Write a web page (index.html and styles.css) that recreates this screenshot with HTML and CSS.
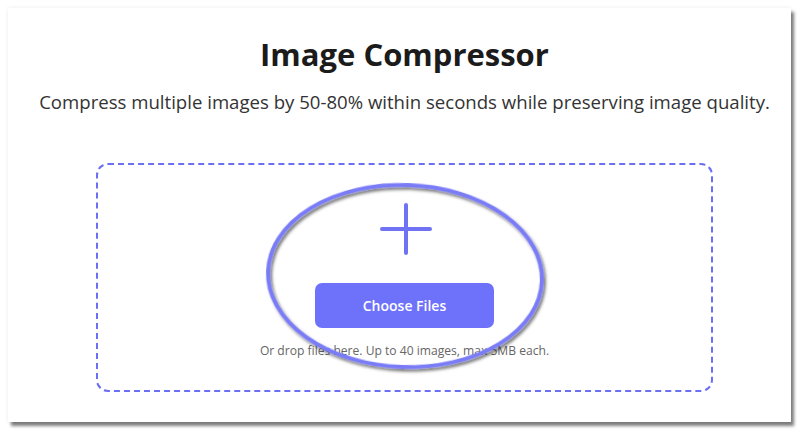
FILE: index.html
```html
<!DOCTYPE html>
<html lang="en">
<head>
<meta charset="utf-8">
<title>Image Compressor</title>
<link rel="stylesheet" href="styles.css">
</head>
<body>
<div class="card">
  <h1 class="title">Image Compressor</h1>
  <p class="subtitle">Compress multiple images by 50-80% within seconds while preserving image quality.</p>
  <div class="dropzone">
    <svg class="plus" width="54" height="54" viewBox="0 0 54 54">
      <path d="M27 3 V51 M3 27 H51" stroke="#6f72f2" stroke-width="4" stroke-linecap="round" fill="none"/>
    </svg>
    <button class="choose">Choose Files</button>
    <p class="hint">Or drop files here. Up to 40 images, max 5MB each.</p>
  </div>
  <svg class="ring" width="300" height="210" viewBox="0 0 300 210">
    <defs>
      <filter id="sh" x="-10%" y="-10%" width="120%" height="120%">
        <feDropShadow dx="2" dy="2.5" stdDeviation="1.6" flood-color="#000" flood-opacity="0.55"/>
      </filter>
    </defs>
    <ellipse cx="150" cy="102" rx="137" ry="91" fill="none" stroke="#7a7cf7" stroke-width="4" filter="url(#sh)" transform="rotate(2 150 102)"/>
  </svg>
</div>
</body>
</html>
```
FILE: styles.css
```css
html, body {
  margin: 0;
  padding: 0;
  background: #ffffff;
}
body {
  font-family: "Open Sans", "Noto Sans", "DejaVu Sans", sans-serif;
  height: 432px;
  overflow: hidden;
}
.card {
  position: relative;
  box-sizing: border-box;
  margin: 8px 0 0 8px;
  width: 783px;
  height: 414px;
  background: #ffffff;
  box-shadow: 3px 4px 3px rgba(0, 0, 0, 0.5), 0 0 4px rgba(0, 0, 0, 0.08);
  padding: 26px 78px 0 88px;
  display: flex;
  flex-direction: column;
  align-items: stretch;
}
.title {
  margin: 0;
  text-align: center;
  font-size: 31px;
  line-height: 40px;
  font-weight: 700;
  color: #1b1b1b;
}
.subtitle {
  margin: 15px -70px 0 -70px;
  text-align: center;
  font-size: 18.6px;
  line-height: 26px;
  color: #333333;
}
.dropzone {
  margin-top: 48px;
  height: 229px;
  box-sizing: border-box;
  border: 2px dashed #6b6ff2;
  border-radius: 12px;
  display: flex;
  flex-direction: column;
  align-items: center;
  padding-top: 37px;
  flex-shrink: 0;
}
.plus {
  display: block;
  margin-left: 2px;
}
.choose {
  margin-top: 27px;
  width: 179px;
  height: 45px;
  border: none;
  border-radius: 7px;
  background: #6e72fb;
  color: #ffffff;
  font-family: "Open Sans", "Noto Sans", sans-serif;
  font-size: 14px;
  font-weight: 600;
  cursor: pointer;
}
.hint {
  margin: 15px 0 0 0;
  font-size: 12.1px;
  line-height: 16px;
  color: #666666;
}
.ring {
  position: absolute;
  left: 247px;
  top: 166px;
  pointer-events: none;
}
```
